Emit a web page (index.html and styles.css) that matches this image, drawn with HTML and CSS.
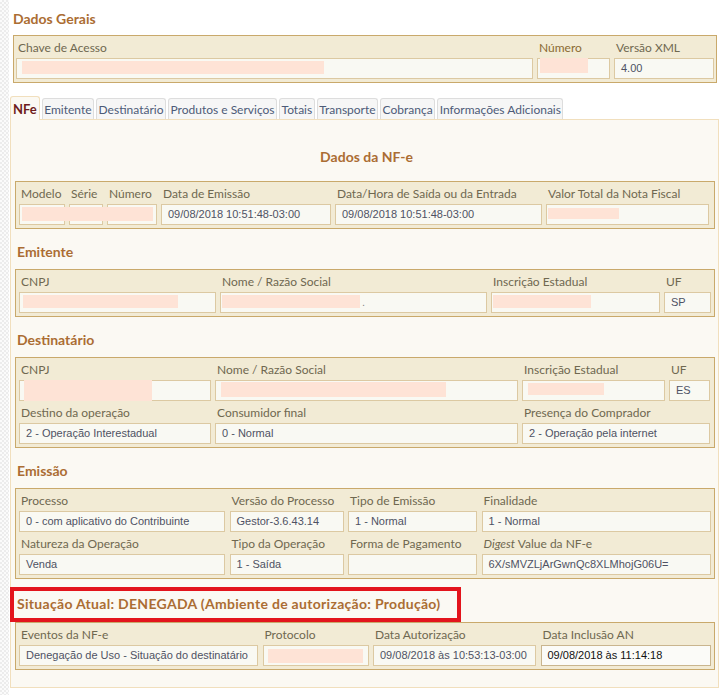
FILE: index.html
```html
<!DOCTYPE html>
<html lang="pt-BR">

<head>
  <meta charset="UTF-8">
  <title>Consulta NF-e</title>
  <link rel="stylesheet" href="styles.css">
</head>

<body>
  <div class="page">

    <div class="geral">
      <h2 class="sec-title">Dados Gerais</h2>
      <div class="box cols-geral">
        <div class="field">
          <label>Chave de Acesso</label>
          <div class="value"><span class="redact r-chave"></span></div>
        </div>
        <div class="field">
          <label class="gold">Número</label>
          <div class="value"><span class="redact r-num0"></span></div>
        </div>
        <div class="field">
          <label>Versão XML</label>
          <div class="value">4.00</div>
        </div>
      </div>
    </div>

    <ul class="tabs">
      <li class="tab active">NFe</li>
      <li class="tab">Emitente</li>
      <li class="tab">Destinatário</li>
      <li class="tab">Produtos e Serviços</li>
      <li class="tab">Totais</li>
      <li class="tab">Transporte</li>
      <li class="tab">Cobrança</li>
      <li class="tab">Informações Adicionais</li>
    </ul>

    <div class="panel">
      <h3 class="sec-title center">Dados da NF-e</h3>
      <div class="box cols-nfe">
        <div class="field">
          <label>Modelo</label>
          <div class="value"><span class="redact r-modelo"></span></div>
        </div>
        <div class="field">
          <label>Série</label>
          <div class="value"></div>
        </div>
        <div class="field">
          <label>Número</label>
          <div class="value"></div>
        </div>
        <div class="field">
          <label>Data de Emissão</label>
          <div class="value">09/08/2018 10:51:48-03:00</div>
        </div>
        <div class="field">
          <label>Data/Hora de Saída ou da Entrada</label>
          <div class="value">09/08/2018 10:51:48-03:00</div>
        </div>
        <div class="field">
          <label>Valor Total da Nota Fiscal</label>
          <div class="value"><span class="redact r-valor"></span></div>
        </div>
      </div>

      <h3 class="sec-title">Emitente</h3>
      <div class="box cols-emit">
        <div class="field">
          <label>CNPJ</label>
          <div class="value"><span class="redact r-ecnpj"></span></div>
        </div>
        <div class="field">
          <label>Nome / Razão Social</label>
          <div class="value"><span class="redact r-enome"></span><span class="dots">.</span></div>
        </div>
        <div class="field">
          <label>Inscrição Estadual</label>
          <div class="value"><span class="redact r-eie"></span></div>
        </div>
        <div class="field">
          <label>UF</label>
          <div class="value">SP</div>
        </div>
      </div>

      <h3 class="sec-title">Destinatário</h3>
      <div class="box cols-dest">
        <div class="field">
          <label>CNPJ</label>
          <div class="value"><span class="redact r-dcnpj"></span></div>
        </div>
        <div class="field">
          <label>Nome / Razão Social</label>
          <div class="value"><span class="redact r-dnome"></span></div>
        </div>
        <div class="field">
          <label>Inscrição Estadual</label>
          <div class="value"><span class="redact r-die"></span></div>
        </div>
        <div class="field">
          <label>UF</label>
          <div class="value">ES</div>
        </div>
        <div class="field">
          <label>Destino da operação</label>
          <div class="value">2 - Operação Interestadual</div>
        </div>
        <div class="field">
          <label>Consumidor final</label>
          <div class="value">0 - Normal</div>
        </div>
        <div class="field span-2">
          <label>Presença do Comprador</label>
          <div class="value">2 - Operação pela internet</div>
        </div>
      </div>

      <h3 class="sec-title">Emissão</h3>
      <div class="box cols-emis">
        <div class="field">
          <label>Processo</label>
          <div class="value">0 - com aplicativo do Contribuinte</div>
        </div>
        <div class="field">
          <label>Versão do Processo</label>
          <div class="value">Gestor-3.6.43.14</div>
        </div>
        <div class="field">
          <label>Tipo de Emissão</label>
          <div class="value">1 - Normal</div>
        </div>
        <div class="field">
          <label>Finalidade</label>
          <div class="value">1 - Normal</div>
        </div>
        <div class="field">
          <label>Natureza da Operação</label>
          <div class="value">Venda</div>
        </div>
        <div class="field">
          <label>Tipo da Operação</label>
          <div class="value">1 - Saída</div>
        </div>
        <div class="field">
          <label>Forma de Pagamento</label>
          <div class="value"></div>
        </div>
        <div class="field">
          <label><i>Digest</i> Value da NF-e</label>
          <div class="value">6X/sMVZLjArGwnQc8XLMhojG06U=</div>
        </div>
      </div>

      <h3 class="sec-title situacao">Situação Atual: DENEGADA (Ambiente de autorização: Produção)</h3>
      <div class="box cols-sit">
        <div class="field">
          <label>Eventos da NF-e</label>
          <div class="value">Denegação de Uso - Situação do destinatário</div>
        </div>
        <div class="field">
          <label>Protocolo</label>
          <div class="value"><span class="redact r-prot"></span></div>
        </div>
        <div class="field">
          <label>Data Autorização</label>
          <div class="value">09/08/2018 às 10:53:13-03:00</div>
        </div>
        <div class="field">
          <label>Data Inclusão AN</label>
          <div class="value strong">09/08/2018 às 11:14:18</div>
        </div>
      </div>
    </div>

  </div>
</body>

</html>
```

FILE: styles.css
```css
body {
  margin: 0;
  font-family: 'Lato', 'DejaVu Sans', sans-serif;
  font-size: 12px;
  background:
    linear-gradient(#fff, #fff) 9px 0 / 100% 100% no-repeat,
    repeating-conic-gradient(#ececec 0 25%, #fbfbfb 0 50%) 0 0 / 4px 4px;
}

.page {
  padding: 0 0 10px 10px;
  width: 709px;
}

.geral {
  margin-left: 3px;
}

.sec-title {
  color: #ab6d33;
  font-size: 14px;
  font-weight: bold;
  line-height: 18px;
  margin: 14px 0 8px 2px;
}

.geral .sec-title {
  margin: 10px 0 7px 0;
}

.center {
  text-align: center;
}

/* field boxes */
.box {
  display: grid;
  column-gap: 4px;
  row-gap: 2px;
  padding: 2px 3px 3px;
  border: 1px solid #c9a96b;
  background-color: #f2ebd5;
}

.geral .box {
  padding: 2px 2px 3px;
  width: 698px;
}

.panel .box {
  width: 692px;
}

.cols-geral { grid-template-columns: 517px 73px 100px; }
.cols-nfe { grid-template-columns: 46px 34px 50px 170px 207px 163px; }
.cols-emit { grid-template-columns: 197px 267px 169px 47px; }
.cols-dest { grid-template-columns: 192px 303px 143px 41px; }
.cols-emis { grid-template-columns: 206px 114px 129px 229px; column-gap: 4.5px; }
.cols-sit { grid-template-columns: 239px 106px 163px 170px; column-gap: 4.5px; }

.span-2 {
  grid-column: span 2;
}

.field label {
  display: block;
  height: 20px;
  line-height: 20px;
  padding-left: 2px;
  color: #6f6850;
  white-space: nowrap;
}

.field label.gold {
  color: #8a6a33;
}

.value {
  position: relative;
  height: 21px;
  box-sizing: border-box;
  border: 1px solid #dcc9a2;
  background-color: #f9f9f3;
  padding: 0 6px;
  font-family: 'Liberation Sans', Arial, sans-serif;
  font-size: 11px;
  line-height: 19px;
  color: #4f5263;
  white-space: nowrap;
}

.value.strong {
  color: #111;
  background-color: #fbfbf8;
  border-color: #c9b58e;
}

.dots {
  position: absolute;
  left: 141px;
  top: 0;
  color: #888;
}

/* blanked-out data */
.redact {
  position: absolute;
  background-color: #fee3d6;
}

.r-chave { left: 5px; top: 2px; width: 302px; height: 13px; }
.r-num0 { left: 2px; top: -1px; width: 48px; height: 15px; }
.r-modelo { left: 2px; top: 2px; width: 131px; height: 14px; z-index: 2; }
.r-valor { left: 1px; top: 3px; width: 71px; height: 11px; }
.r-ecnpj { left: 3px; top: 2px; width: 155px; height: 13px; }
.r-enome { left: 1px; top: 2px; width: 138px; height: 13px; }
.r-eie { left: 1px; top: 2px; width: 98px; height: 13px; }
.r-dcnpj { left: 4px; top: -1px; width: 128px; height: 21px; }
.r-dnome { left: 5px; top: 1px; width: 225px; height: 15px; }
.r-die { left: 5px; top: 2px; width: 76px; height: 12px; }
.r-prot { left: 4px; top: 3px; width: 95px; height: 14px; }

/* tabs */
.tabs {
  display: flex;
  gap: 2px;
  align-items: flex-end;
  list-style: none;
  margin: 13px 0 0 0;
  padding: 0;
  position: relative;
  z-index: 1;
}

.tab {
  height: 21px;
  line-height: 21px;
  box-sizing: border-box;
  padding: 0 1.5px;
  border: 1px solid #ddd;
  border-bottom: none;
  border-radius: 3px 3px 0 0;
  background-color: #f6f6f6;
  color: #4d5b78;
  font-size: 12px;
}

.tab.active {
  height: 24px;
  line-height: 24px;
  margin-bottom: -1px;
  padding: 0 2px;
  border-color: #f1dfbd;
  background-color: #fbf9f3;
  color: #6e1c1c;
  font-weight: bold;
  font-size: 13px;
}

.panel {
  border: 1px solid #f1dfbd;
  background-color: #fbf9f3;
  padding: 28px 2px 17px 4px;
}

.panel > .sec-title:first-child {
  margin-top: 0;
  margin-bottom: 15px;
}

.situacao {
  margin: 8px 0 0 -5px;
  width: 451px;
  box-sizing: border-box;
  border: 4px solid #e3141c;
  padding: 4px 3px 5px;
  letter-spacing: 0.3px;
  white-space: nowrap;
}
```
